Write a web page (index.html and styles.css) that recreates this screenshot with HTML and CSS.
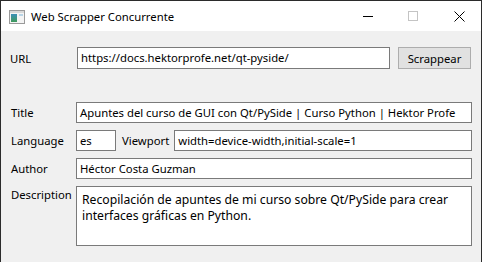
FILE: index.html
```html
<!DOCTYPE html>
<html lang="es">
<head>
  <meta charset="UTF-8">
  <title>Web Scrapper Concurrente</title>
  <link rel="stylesheet" href="styles.css">
</head>
<body>

<div class="window">
  <div class="titlebar">
    <svg class="app-icon" width="16" height="14" viewBox="0 0 16 14">
      <defs>
        <linearGradient id="g" x1="0" y1="0" x2="0" y2="1">
          <stop offset="0" stop-color="#3b8fb8"/>
          <stop offset="1" stop-color="#3f9a5a"/>
        </linearGradient>
      </defs>
      <rect x="0.5" y="0.5" width="15" height="13" fill="#f4f4f4" stroke="#9a9a9a"/>
      <rect x="1" y="1" width="14" height="2" fill="#d8d8d8"/>
      <rect x="2" y="4" width="6" height="8" fill="url(#g)"/>
      <rect x="10" y="4" width="4" height="2" fill="#b8d4e6"/>
    </svg>
    <span class="win-title">Web Scrapper Concurrente</span>
    <div class="controls">
      <span class="ctl ctl-min"></span>
      <span class="ctl ctl-max"></span>
      <svg class="ctl-close" width="11" height="11" viewBox="0 0 11 11">
        <path d="M0.5 0.5 L10.5 10.5 M10.5 0.5 L0.5 10.5" stroke="#000" stroke-width="1"/>
      </svg>
    </div>
  </div>

  <div class="content">
    <div class="url-row">
      <label class="lbl">URL</label>
      <div class="field grow">https://docs.hektorprofe.net/qt-pyside/</div>
      <button class="btn">Scrappear</button>
    </div>

    <div class="form">
      <label class="lbl">Title</label>
      <div class="field">Apuntes del curso de GUI con Qt/PySide | Curso Python | Hektor Profe</div>

      <label class="lbl">Language</label>
      <div class="inline-row">
        <div class="field lang">es</div>
        <label class="lbl">Viewport</label>
        <div class="field grow">width=device-width,initial-scale=1</div>
      </div>

      <label class="lbl">Author</label>
      <div class="field">Héctor Costa Guzman</div>

      <label class="lbl lbl-top">Description</label>
      <div class="field area">Recopilación de apuntes de mi curso sobre Qt/PySide para crear interfaces gráficas en Python.</div>
    </div>
  </div>
</div>

</body>
</html>
```

FILE: styles.css
```css
* {margin:0;padding:0;box-sizing:border-box}
body {
  font-family: "Noto Sans", "Open Sans", sans-serif;
  font-size: 11.3px;
  color: #000;
  background: #f0f0f0;
}
.window {
  width: 482px;
  height: 262px;
  border: 1px solid #2b2b2b;
  border-bottom: none;
  background: #f0f0f0;
  display: flex;
  flex-direction: column;
}
.titlebar {
  height: 30px;
  background: #fff;
  display: flex;
  align-items: center;
  padding-left: 8px;
}
.app-icon {margin-top:1px;}
.win-title {
  margin-left: 6px;
  color: #000;
}
.controls {
  margin-left: auto;
  display: flex;
  align-items: center;
  height: 100%;
}
.ctl {display:block;}
.ctl-min {
  width: 10px;
  height: 1px;
  background: #000;
  margin-right: 35px;
}
.ctl-max {
  width: 10px;
  height: 10px;
  border: 1px solid #c4c4c4;
  margin-right: 36px;
}
.ctl-close {margin-right: 16px;}

.content {
  flex: 1;
  padding: 16px 9px 0 9px;
}
.url-row {
  display: flex;
  align-items: center;
  height: 22px;
  gap: 8px;
}
.url-row .lbl {width: 59px;}
.lbl {white-space: nowrap;}
.field {
  height: 21px;
  line-height: 19px;
  background: #fff;
  border: 1px solid #7a7a7a;
  padding: 0 3px;
  white-space: nowrap;
  overflow: hidden;
}
.url-row .field {height: 22px; line-height: 20px;}
.grow {flex: 1;}
.btn {
  width: 73px;
  height: 22px;
  margin-right: 1px;
  background: #e1e1e1;
  border: 1px solid #adadad;
  font: inherit;
  color: #000;
}

.form {
  margin-top: 33px;
  display: grid;
  grid-template-columns: 66px 1fr;
  row-gap: 7px;
  align-items: center;
}
.form .lbl {padding-left: 1px;}
.lbl-top {align-self: start; padding-top: 1px;}
.inline-row {
  display: flex;
  align-items: center;
  gap: 5px;
}
.lang {width: 40px;}
.inline-row .lbl {margin-right: 0;}
.area {
  height: 60px;
  white-space: normal;
  font-size: 12.2px;
  padding: 5px 5px 0 5px;
  line-height: 16px;
}
```
